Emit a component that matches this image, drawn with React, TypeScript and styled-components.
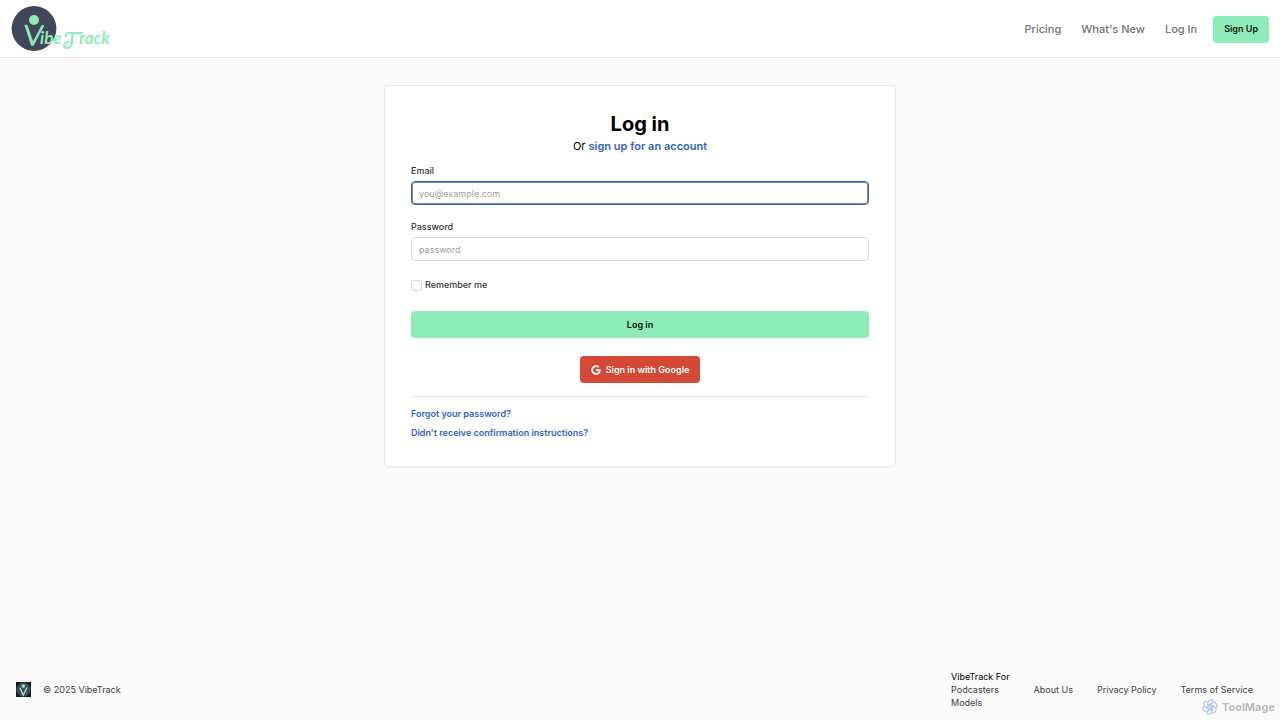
import React from "react";
import styled, { createGlobalStyle } from "styled-components";
import { FaGoogle } from "react-icons/fa";

const GlobalStyle = createGlobalStyle`
  *, *::before, *::after { box-sizing: border-box; }
  body {
    margin: 0;
    background: #fafafa;
    color: #000;
    font-family: Inter, "Liberation Sans", sans-serif;
    font-size: 9px;
    line-height: 14px;
  }
  a { color: inherit; text-decoration: none; }
  button, input { font: inherit; }
`;

const Page = styled.div`
  min-height: 100vh;
  display: flex;
  flex-direction: column;
`;

const Header = styled.header`
  display: flex;
  align-items: center;
  justify-content: space-between;
  height: 58px;
  padding: 1px 11px 0;
  background: #fff;
  border-bottom: 1px solid #e8e8e8;
`;

const LogoLink = styled.a`
  display: flex;
`;

const Nav = styled.nav`
  display: flex;
  align-items: center;
  gap: 20px;
  font-size: 11px;
  font-weight: 500;
  color: #737373;
`;

const Button = styled.button<{ $tone?: "green" | "red"; $block?: boolean }>`
  display: flex;
  align-items: center;
  justify-content: center;
  gap: 5px;
  width: ${(p) => (p.$block ? "100%" : "auto")};
  height: 27px;
  padding: 0 11px;
  border: 0;
  border-radius: 4px;
  font-size: 9px;
  font-weight: 600;
  cursor: pointer;
  color: ${(p) => (p.$tone === "red" ? "#fff" : "#06180e")};
  background: ${(p) => (p.$tone === "red" ? "#d34836" : "#8eecb9")};
`;

const SignUp = styled(Button)`
  margin-left: -4px;
`;

const Main = styled.main`
  flex: 1;
  padding: 27px 16px;
`;

const Card = styled.section`
  max-width: 512px;
  margin: 0 auto;
  padding: 25px 26px 26px;
  background: #fff;
  border: 1px solid #e8e8e8;
  border-radius: 5px;
  box-shadow: 0 1px 2px rgba(0, 0, 0, 0.05);
`;

const Title = styled.h1`
  margin: 0;
  font-size: 20px;
  line-height: 26px;
  font-weight: 700;
  text-align: center;
`;

const Subtitle = styled.p`
  margin: 0 0 9px;
  font-size: 11px;
  line-height: 18px;
  text-align: center;
`;

const BlueLink = styled.a`
  font-weight: 600;
  color: #3563c1;
`;

const Form = styled.form`
  display: flex;
  flex-direction: column;
`;

const Field = styled.div`
  display: flex;
  flex-direction: column;
  gap: 3px;
  margin-bottom: 15px;
`;

const Label = styled.label`
  font-weight: 500;
  color: #333;
`;

const Input = styled.input<{ $active?: boolean }>`
  width: 100%;
  height: 24px;
  padding: 0 7px;
  border: 1px solid ${(p) => (p.$active ? "#3563a8" : "#d8d8d8")};
  border-radius: 4px;
  outline: none;
  background: #fff;
  box-shadow: ${(p) => (p.$active ? "inset 0 0 0 1px #6d8ab5" : "none")};
  &::placeholder { color: #a0a0a0; opacity: 1; }
`;

const CheckRow = styled.div`
  display: flex;
  align-items: center;
  gap: 3px;
  margin: 2px 0 19px;
`;

const Checkbox = styled.input`
  appearance: none;
  width: 11px;
  height: 11px;
  margin: 0;
  border: 1px solid #d8d8d8;
  border-radius: 3px;
  background: #fff;
  &:checked { background: #3563c1; }
`;

const GoogleRow = styled.div`
  display: flex;
  justify-content: center;
  margin: 18px 0 13px;
`;

const HelpLinks = styled.div`
  display: flex;
  flex-direction: column;
  align-items: flex-start;
  gap: 5px;
  padding-top: 10px;
  border-top: 1px solid #e5e5e5;
`;

const Footer = styled.footer`
  display: flex;
  align-items: center;
  justify-content: space-between;
  padding: 11px 27px 11px 16px;
  line-height: 13px;
  color: #404040;
`;

const Copyright = styled.div`
  display: flex;
  align-items: center;
  gap: 12px;
`;

const FooterNav = styled.nav`
  display: flex;
  align-items: center;
  gap: 24px;
`;

const FooterGroup = styled.div`
  display: flex;
  flex-direction: column;
`;

const FooterHeading = styled.span`
  color: #000;
`;

const Watermark = styled.div`
  position: fixed;
  right: 5px;
  bottom: 5px;
  display: flex;
  align-items: center;
  gap: 4px;
  font-size: 11px;
  line-height: 16px;
  font-weight: 700;
  color: #b9b9b9;
`;

function Logo() {
  return (
    <svg width="103" height="46" viewBox="0 0 103 46" role="img" aria-label="VibeTrack">
      <circle cx="23" cy="22.5" r="22.4" fill="#41465b" />
      <circle cx="23" cy="14" r="5" fill="#8eecb9" />
      <path d="M13.8 19.2h2.4l5.8 17 8.9-17 2 .5-10.6 19.8h-1.8z" fill="#8eecb9" stroke="#8eecb9" strokeWidth=".7" />
      <g fill="#8eecb9" fontFamily="Lato, sans-serif" fontSize="17" fontWeight="700" fontStyle="italic">
        <text x="29" y="38">ibe</text>
        <text x="56" y="38">T</text>
        <text x="68" y="38">rack</text>
      </g>
      <path
        d="M61.5 36c-1.3 5.2-4 6.3-6.3 6.1-3.3-.3-3.5-4.6 1.8-6.3M57.5 27c-2 .2-3.2 1.8-2.8 3.5M65 27h6"
        fill="none"
        stroke="#8eecb9"
        strokeWidth="2"
        strokeLinecap="round"
      />
    </svg>
  );
}

function FooterMark() {
  return (
    <svg width="15" height="15" viewBox="0 0 15 15" aria-hidden="true">
      <path d="M0 0h15v15H0z" fill="#15161d" />
      <circle cx="7.5" cy="7.5" r="7.2" fill="#41465b" />
      <circle cx="7.3" cy="4.1" r="1.8" fill="#8eecb9" />
      <path d="M4 5.8 7.2 13 11 5.5" fill="none" stroke="#8eecb9" strokeWidth="1.4" />
    </svg>
  );
}

function KnotMark() {
  return (
    <svg width="16" height="16" viewBox="0 0 24 24" fill="none" stroke="#b3c9f3" strokeWidth="1.9" aria-hidden="true">
      <circle cx="12" cy="12" r="4" fill="#d3e0f8" stroke="none" />
      {[0, 60, 120, 180, 240, 300].map((angle) => (
        <path
          key={angle}
          transform={`rotate(${angle} 12 12)`}
          d="M12 15.8 8.6 13.8V6.2c0-5.6 7.4-6.5 9-1.8M8.6 9.8l6.3-3.6"
        />
      ))}
    </svg>
  );
}

export default function App() {
  return (
    <Page>
      <GlobalStyle />
      <Header>
        <LogoLink href="#"><Logo /></LogoLink>
        <Nav>
          <a href="#pricing">Pricing</a>
          <a href="#news">What's New</a>
          <a href="#login">Log In</a>
          <SignUp type="button">Sign Up</SignUp>
        </Nav>
      </Header>
      <Main>
        <Card>
          <Title>Log in</Title>
          <Subtitle>
            Or <BlueLink href="#signup">sign up for an account</BlueLink>
          </Subtitle>
          <Form onSubmit={(e) => e.preventDefault()}>
            <Field>
              <Label htmlFor="email">Email</Label>
              <Input id="email" type="email" placeholder="you@example.com" $active />
            </Field>
            <Field>
              <Label htmlFor="password">Password</Label>
              <Input id="password" type="password" placeholder="password" />
            </Field>
            <CheckRow>
              <Checkbox id="remember" type="checkbox" />
              <Label htmlFor="remember">Remember me</Label>
            </CheckRow>
            <Button type="submit" $block>Log in</Button>
          </Form>
          <GoogleRow>
            <Button type="button" $tone="red"><FaGoogle size={10} />Sign in with Google</Button>
          </GoogleRow>
          <HelpLinks>
            <BlueLink href="#forgot">Forgot your password?</BlueLink>
            <BlueLink href="#confirm">Didn't receive confirmation instructions?</BlueLink>
          </HelpLinks>
        </Card>
      </Main>
      <Footer>
        <Copyright><FooterMark />© 2025 VibeTrack</Copyright>
        <FooterNav>
          <FooterGroup>
            <FooterHeading>VibeTrack For</FooterHeading>
            <a href="#podcasters">Podcasters</a>
            <a href="#models">Models</a>
          </FooterGroup>
          <a href="#about">About Us</a>
          <a href="#privacy">Privacy Policy</a>
          <a href="#terms">Terms of Service</a>
        </FooterNav>
      </Footer>
      <Watermark><KnotMark />ToolMage</Watermark>
    </Page>
  );
}
